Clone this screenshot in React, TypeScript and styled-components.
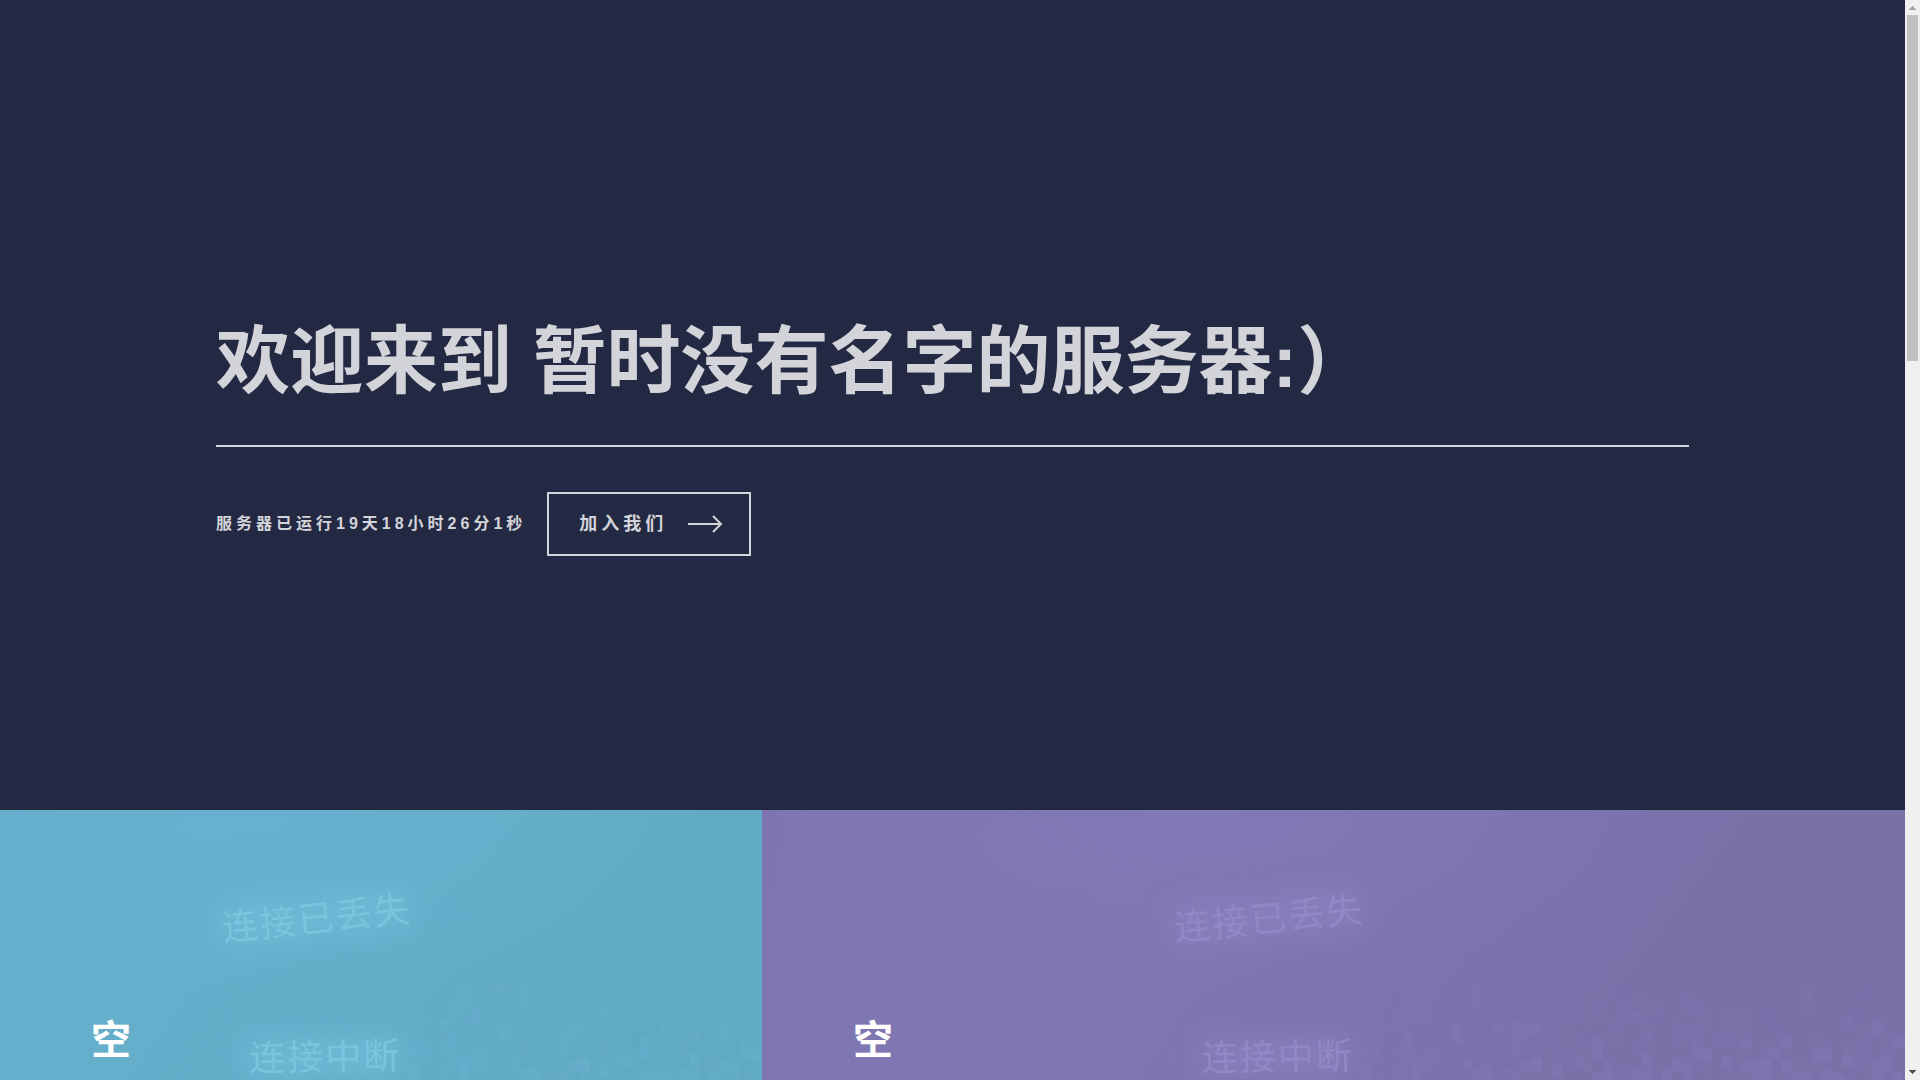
import React from 'react';
import styled, { createGlobalStyle } from 'styled-components';

const GlobalStyle = createGlobalStyle`
  *, *::before, *::after { box-sizing: border-box; }
  body {
    margin: 0;
    background: #242943;
    color: #ffffff;
    font-family: "Liberation Sans", "Noto Sans CJK SC", sans-serif;
  }
`;

const Window = styled.div`
  display: flex;
  height: 100vh;
  overflow: hidden;
`;

const Page = styled.main`
  flex: 1;
  min-width: 0;
  overflow: hidden;
`;

const Banner = styled.section`
  display: flex;
  flex-direction: column;
  justify-content: center;
  height: 75vh;
  padding: 48px 216px 0;
  background: #242943;
  color: #d3d4d9;
`;

const BannerTitle = styled.h1`
  margin: 0 0 45px;
  padding-bottom: 24px;
  border-bottom: 2px solid currentColor;
  font-size: 74px;
  font-weight: 700;
  line-height: 119px;
`;

const BannerRow = styled.div`
  display: flex;
  align-items: center;
  gap: 21px;
`;

const Uptime = styled.p`
  margin: 0;
  font-size: 16px;
  font-weight: 700;
  line-height: 24px;
  letter-spacing: 4px;
`;

const JoinButton = styled.button`
  display: flex;
  align-items: center;
  gap: 20px;
  height: 64px;
  padding: 0 26px 0 30px;
  border: 2px solid currentColor;
  background: transparent;
  color: inherit;
  font-family: inherit;
  font-size: 18px;
  font-weight: 700;
  line-height: 24px;
  letter-spacing: 4px;
  cursor: pointer;
`;

const Tiles = styled.section`
  display: grid;
  grid-template-columns: 2fr 3fr;
`;

const Tile = styled.article`
  position: relative;
  display: flex;
  flex-direction: column;
  justify-content: center;
  height: 460px;
  padding: 0 91px;
  overflow: hidden;
`;

const TileTitle = styled.h3`
  position: relative;
  margin: 0;
  font-size: 40px;
  font-weight: 700;
  line-height: 60px;
`;

const Backdrop = styled.svg`
  position: absolute;
  inset: 0;
  width: 100%;
  height: 100%;
`;

const GhostText = styled.text`
  font-family: "Noto Sans CJK SC", sans-serif;
  font-size: 36px;
  font-weight: 400;
  letter-spacing: 2px;
`;

const Scrollbar = styled.div`
  display: flex;
  flex-direction: column;
  justify-content: space-between;
  flex: 0 0 15px;
  background: #f0f0f0;
`;

const Thumb = styled.div`
  flex: 0 0 32%;
  margin: 0 2px auto;
  background: #c1c1c1;
`;

const ScrollArrow = styled.svg`
  display: block;
  width: 15px;
  height: 15px;
`;

interface Palette {
  id: string;
  base: string;
  light: string;
  dark: string;
  glow: string;
  ink: string;
}

const palettes: Palette[] = [
  { id: 'sky', base: '#64adc9', light: '#67b1ce', dark: '#61aac4', glow: '#70bbd7', ink: '#7ac4de' },
  { id: 'violet', base: '#7e75b0', light: '#8179b5', dark: '#7b71a9', glow: '#8980bd', ink: '#9188c5' },
];

const noise = (n: number) => {
  const v = Math.sin(n * 127.1 + 11.7) * 43758.5453;
  return v - Math.floor(v);
};

const columns = 56;
const cells = Array.from({ length: columns * 24 }, (_, i) => {
  const column = i % columns;
  const row = Math.floor(i / columns);
  const depth = Math.min(1, (row + 1) / 11);
  return {
    x: 600 + column * 10,
    y: 160 + row * 12 + Math.round(noise(column + 900) * 8),
    wide: noise(i + 31) > 0.85,
    bright: noise(i + 57) > 0.2,
    shown: noise(i) < depth * 0.75,
    opacity: 0.1 + depth * 0.6 * noise(i + 77),
  };
}).filter((cell) => cell.shown);

function Scene({ palette: p }: { palette: Palette }) {
  return (
    <Backdrop viewBox="0 0 1143 460" preserveAspectRatio="xMidYMid slice" aria-hidden="true">
      <defs>
        <linearGradient id={`${p.id}-wash`} x1="0" y1="0" x2="1" y2="0.3">
          <stop offset="0" stopColor={p.base} />
          <stop offset="0.3" stopColor={p.light} stopOpacity="0.4" />
          <stop offset="0.5" stopColor={p.base} />
          <stop offset="0.8" stopColor={p.dark} />
        </linearGradient>
        <radialGradient id={`${p.id}-top`} cx="0.38" cy="0" r="0.4">
          <stop offset="0" stopColor={p.light} />
          <stop offset="1" stopColor={p.light} stopOpacity="0" />
        </radialGradient>
        <filter id={`${p.id}-blur`} x="-30%" y="-120%" width="160%" height="340%">
          <feGaussianBlur stdDeviation="14" />
        </filter>
      </defs>
      <rect width="1143" height="460" fill={p.base} />
      <rect width="1143" height="460" fill={`url(#${p.id}-wash)`} />
      <rect width="1143" height="460" fill={`url(#${p.id}-top)`} />
      {cells.map((cell, i) => (
        <rect
          key={i}
          x={cell.x}
          y={cell.y}
          width={cell.wide ? 20 : 10}
          height="12"
          fill={cell.bright ? p.light : p.dark}
          opacity={cell.opacity}
        />
      ))}
      <g transform="rotate(-6 415 131)">
        <rect x="412" y="96" width="190" height="42" fill={p.glow} opacity="0.8" filter={`url(#${p.id}-blur)`} />
        <GhostText x="414" y="131" fill={p.ink}>连接已丢失</GhostText>
      </g>
      <g transform="rotate(-1 441 261)">
        <rect x="438" y="228" width="154" height="40" fill={p.glow} opacity="0.8" filter={`url(#${p.id}-blur)`} />
        <GhostText x="440" y="261" fill={p.ink}>连接中断</GhostText>
      </g>
    </Backdrop>
  );
}

export default function App() {
  return (
    <>
      <GlobalStyle />
      <Window>
        <Page>
          <Banner>
            <BannerTitle>欢迎来到 暂时没有名字的服务器:）</BannerTitle>
            <BannerRow>
              <Uptime>服务器已运行19天18小时26分1秒</Uptime>
              <JoinButton type="button">
                加入我们
                <svg width="36" height="18" viewBox="0 0 36 18" fill="none" stroke="currentColor" strokeWidth="2" aria-hidden="true">
                  <path d="M1 9H34M26 1L34 9L26 17" />
                </svg>
              </JoinButton>
            </BannerRow>
          </Banner>
          <Tiles>
            {palettes.map((palette) => (
              <Tile key={palette.id}>
                <Scene palette={palette} />
                <TileTitle>空</TileTitle>
              </Tile>
            ))}
          </Tiles>
        </Page>
        <Scrollbar aria-hidden="true">
          <ScrollArrow viewBox="0 0 15 15" fill="#a3a3a3">
            <path d="M7 6h1v1h1v1h1v1h1v1H4V9h1V8h1V7h1z" />
          </ScrollArrow>
          <Thumb />
          <ScrollArrow viewBox="0 0 15 15" fill="#505050">
            <path d="M4 5h7v1h-1v1H9v1H8v1H7V8H6V7H5V6H4z" />
          </ScrollArrow>
        </Scrollbar>
      </Window>
    </>
  );
}
